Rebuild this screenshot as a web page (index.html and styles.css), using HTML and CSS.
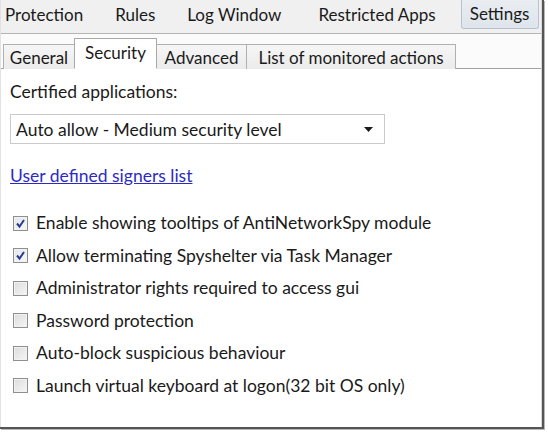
FILE: index.html
```html
<!DOCTYPE html>
<html>
<head>
<meta charset="utf-8">
<link rel="stylesheet" href="styles.css">
</head>
<body>
<div class="frame">
  <div class="window">
    <div class="menubar">
      <span class="menu-item m-protection">Protection</span>
      <span class="menu-item m-rules">Rules</span>
      <span class="menu-item m-log">Log Window</span>
      <span class="menu-item m-restricted">Restricted Apps</span>
      <span class="menu-item m-settings active">Settings</span>
    </div>
    <div class="tabstrip">
      <div class="tab t-general">General</div>
      <div class="tab t-security selected">Security</div>
      <div class="tab t-advanced">Advanced</div>
      <div class="tab t-list">List of monitored actions</div>
    </div>
    <div class="panel">
      <div class="label">Certified applications:</div>
      <div class="select">
        <span class="select-text">Auto allow - Medium security level</span>
        <svg class="arrow" width="9" height="5" viewBox="0 0 9 5"><path d="M0 0 L9 0 L4.5 5 Z" fill="#1a1a1a"/></svg>
      </div>
      <a class="link" href="#">User defined signers list</a>
      <div class="checks">
        <div class="check"><span class="box checked"><svg width="11" height="11" viewBox="0 0 11 11"><path d="M2 5.5 L4.5 8.5 L9 2" fill="none" stroke="#2d3b8f" stroke-width="2"/></svg></span><span>Enable showing tooltips of AntiNetworkSpy module</span></div>
        <div class="check"><span class="box checked"><svg width="11" height="11" viewBox="0 0 11 11"><path d="M2 5.5 L4.5 8.5 L9 2" fill="none" stroke="#2d3b8f" stroke-width="2"/></svg></span><span>Allow terminating Spyshelter via Task Manager</span></div>
        <div class="check"><span class="box"></span><span>Administrator rights required to access gui</span></div>
        <div class="check"><span class="box"></span><span>Password protection</span></div>
        <div class="check"><span class="box"></span><span>Auto-block suspicious behaviour</span></div>
        <div class="check"><span class="box"></span><span>Launch virtual keyboard at logon(32 bit OS only)</span></div>
      </div>
    </div>
  </div>
</div>
</body>
</html>
```
FILE: styles.css
```css
html, body {
  margin: 0;
  padding: 0;
  background: #ffffff;
}
body {
  font-family: Lato, "Open Sans", sans-serif;
  color: #1a1a1a;
  width: 548px;
  height: 433px;
  overflow: hidden;
}
.frame {
  width: 542px;
  height: 427px;
  border-right: 2px solid #555;
  border-bottom: 2px solid #555;
  box-shadow: 1px 1px 0 #b8b8b8;
}
.window {
  height: 427px;
  display: flex;
  flex-direction: column;
  border-left: 1px solid #e2e2e2;
  border-right: 1px solid #d8d8d8;
  box-sizing: border-box;
}
.menubar {
  height: 33px;
  background: #f0f0f0;
  border-bottom: 1px solid #b4b4b4;
  display: flex;
  align-items: flex-start;
  font-size: 17px;
  flex-shrink: 0;
}
.menu-item {
  line-height: 30px;
  padding: 0 4px;
}
.m-protection { margin-left: 0; }
.m-rules { margin-left: 24px; }
.m-log { margin-left: 24px; }
.m-restricted { margin-left: 29px; }
.m-settings {
  margin-left: 21px;
  width: 78px;
  height: 29px;
  box-sizing: border-box;
  text-align: center;
  line-height: 28px;
  background: linear-gradient(#e9edf2, #dfe5ec);
  border: 1px solid #b9c2cc;
  border-top: none;
  border-radius: 0 0 3px 3px;
  padding: 0;
}
.tabstrip {
  height: 35px;
  flex-shrink: 0;
  background: #fbfbfb;
  border-bottom: 1px solid #a0a0a0;
  display: flex;
  align-items: flex-end;
  padding-left: 2px;
  font-size: 17px;
  box-sizing: border-box;
}
.tab {
  height: 25px;
  line-height: 26px;
  border: 1px solid #b0b0b0;
  border-bottom: none;
  background: linear-gradient(#f6f6f6, #ebebeb);
  box-sizing: border-box;
  text-align: center;
  margin-bottom: -1px;
}
.t-general { width: 71px; border-right: none; }
.t-security { width: 83px; }
.t-advanced { width: 90px; border-left: none; }
.t-list { width: 209px; border-left: none; }
.tab.selected {
  height: 31px;
  line-height: 28px;
  background: #ffffff;
  border-color: #a8a8a8;
  position: relative;
  z-index: 1;
  padding-bottom: 4px;
  border-bottom: 1px solid #fff;
}
.panel {
  flex: 1;
  background: #ffffff;
  padding: 11px 0 0 9px;
  font-size: 17.5px;
}
.label {
  height: 24px;
  line-height: 24px;
}
.select {
  margin-top: 10px;
  width: 375px;
  height: 30px;
  box-sizing: border-box;
  border: 1px solid #cacaca;
  display: flex;
  align-items: center;
  justify-content: space-between;
  padding: 0 11px 0 5px;
}
.arrow { display: block; }
.link {
  display: inline-block;
  margin-top: 20px;
  color: #2b2bc4;
  text-decoration: underline;
  line-height: 24px;
}
.checks {
  margin-top: 23px;
  display: flex;
  flex-direction: column;
  gap: 8.6px;
}
.check {
  display: flex;
  align-items: center;
  height: 24px;
  line-height: 24px;
}
.box {
  width: 15px;
  height: 15px;
  margin-left: 3px;
  margin-right: 8px;
  box-sizing: border-box;
  border: 1px solid #8e8f8f;
  background: linear-gradient(135deg, #dcdcdc, #f6f6f6);
  box-shadow: inset 0 0 0 1px #f2f2f2;
  display: flex;
  align-items: center;
  justify-content: center;
}
.box.checked {
  background: linear-gradient(135deg, #e4e6ee, #f7f7fa);
}
```
